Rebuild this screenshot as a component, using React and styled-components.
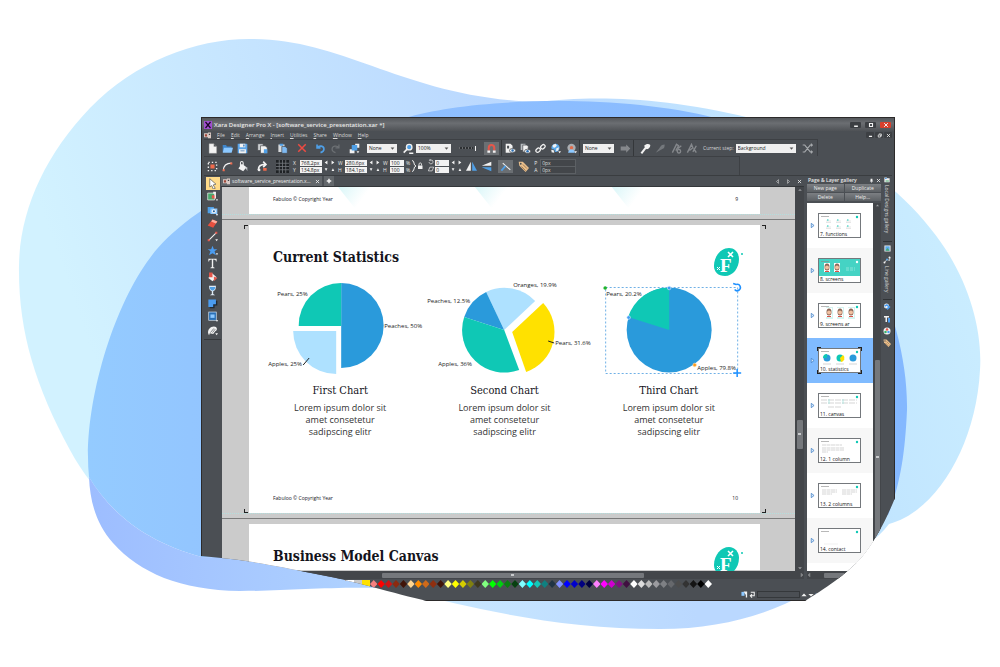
import React from 'react';
import styled, { createGlobalStyle } from 'styled-components';

const ui = '"Open Sans", "Noto Sans", sans-serif';
const body = '"Open Sans", "Noto Sans", sans-serif';
const serif = '"DejaVu Serif Condensed", "DejaVu Serif", serif';

const teal = '#0fc8b5';
const blue = '#2a9adb';
const sky = '#aee1ff';
const yellow = '#ffe100';

const GlobalStyle = createGlobalStyle`
	* {
		box-sizing: border-box;
	}
	body {
		margin: 0;
		background: #fff;
		font-family: ${ui};
	}
	h1, h2, h3, p, ul {
		margin: 0;
		padding: 0;
	}
`;

/* ---------- icons, all on a 16 x 16 grid ---------- */

const W = '#f2f2f2';
const B = '#4f9fe6';
const G = '#85888c';

const drawings = {
	newPage: <path fill={W} d="M3 1h7l4 4v10H3zM10 1v4h4" stroke="#999" strokeWidth=".6" />,
	open: (
		<>
			<path fill="#3f86cc" d="M1 3h5l1 2h7v8H1z" />
			<path fill="#8cc8ff" d="M3 7h13l-2 7H1z" />
		</>
	),
	save: (
		<>
			<path fill="#5ba4e8" d="M1 1h13l1 1v13H1z" />
			<path fill={W} d="M4 1h8v5H4zM3 9h10v6H3z" />
			<path fill="#3a76b5" d="M9 2h2v3H9zM5 11h6v1H5z" />
		</>
	),
	copy: (
		<>
			<path fill="#d0d3d6" stroke="#44484c" d="M1 1h8v10H1z" />
			<path fill={W} stroke="#44484c" d="M5 4h7l3 3v8H5z" />
			<path fill={B} d="M10 9h5v6h-5z" />
		</>
	),
	paste: (
		<>
			<path fill="#d8dadc" d="M2 2h9v11H2z" />
			<path fill={B} d="M4 1h5v3H4z" />
			<path fill="#7fbaf2" stroke="#44484c" d="M7 5h5l3 3v7H7z" />
		</>
	),
	remove: <path stroke="#ee4b42" strokeWidth="2.4" d="M2 2l12 12M14 2L2 14" />,
	undo: <path fill="none" stroke={B} strokeWidth="2.4" d="M3 2v5h5M3 7c3-4 10-3 10 2 0 3-2 4-5 5" />,
	redo: <path fill="none" stroke="#6c7074" strokeWidth="1.8" d="M13 2v5H8M13 7C10 3 3 4 3 9c0 3 2 4 5 5" />,
	arrange: (
		<>
			<path fill={W} d="M9 1h6v6H9zM1 9h7v6H1z" />
			<path fill={B} d="M4 3h8v8H4z" />
			<path fill={W} d="M11 12h4l-2 3z" />
		</>
	),
	zoom: (
		<>
			<circle cx="9" cy="6" r="4" fill="#4f9fe6" stroke={W} strokeWidth="2" />
			<path stroke={W} strokeWidth="2.4" d="M6 9l-5 5M9 15h6" />
		</>
	),
	magnet: (
		<>
			<path fill="none" stroke="#e4574b" strokeWidth="3" d="M4 11V7a4 4 0 018 0v4" />
			<path fill={W} d="M2 11h4v3H2zM10 11h4v3h-4z" />
		</>
	),
	preview: (
		<>
			<path fill={W} d="M1 1h7l3 3v10H1z" />
			<path fill="#4b4f54" d="M3 4h3v4H3z" />
			<ellipse cx="11" cy="11" rx="4.5" ry="3" fill={W} stroke="#3c4044" />
			<circle cx="11" cy="11" r="1.8" fill="#2a6fb5" />
		</>
	),
	previewAll: (
		<>
			<path fill="#b8bcc0" d="M1 1h7v9H1z" />
			<path fill={W} stroke="#44484c" d="M4 3h6l2 2v8H4z" />
			<ellipse cx="11" cy="12" rx="4.5" ry="3" fill={W} stroke="#3c4044" />
			<circle cx="11" cy="12" r="1.8" fill="#2a6fb5" />
		</>
	),
	link: (
		<g fill="none" stroke={W} strokeWidth="1.8">
			<rect x="1" y="8" width="7" height="5" rx="2.5" transform="rotate(-45 4.5 10.5)" />
			<rect x="8" y="3" width="7" height="5" rx="2.5" transform="rotate(-45 11.5 5.5)" />
		</g>
	),
	globe: (
		<>
			<circle cx="8" cy="7" r="6" fill="#5aa9ea" />
			<path fill={W} d="M4 3l4-2 2 3-3 3-3-1zM9 8l4-2-1 5-3 1z" />
			<path fill={W} stroke="#3c4044" d="M1 9l5 1 1 5-5-1z" />
			<path fill={W} d="M12 12h4l-2 3z" />
		</>
	),
	globeUser: (
		<>
			<circle cx="8" cy="7" r="6" fill="#a9adb1" />
			<circle cx="8" cy="7" r="2.5" fill="#e06b4a" />
			<path fill="#8cc8ff" d="M3 14c1-6 9-6 10 0z" />
			<path fill={W} d="M12 12h4l-2 3z" />
		</>
	),
	arrow: <path fill={G} d="M1 5h8V2l6 6-6 6v-3H1z" />,
	key: (
		<>
			<path fill={W} d="M6 4c3-3 7-3 9-1 0 3-2 6-5 6l-2-1z" />
			<path stroke={W} strokeWidth="3" d="M9 6l-7 9" />
		</>
	),
	keyOff: <path fill="#74787c" d="M14 2c-3 0-5 1-6 3l-2 3-5 6 7-4 4-2c2-1 2-4 2-6z" />,
	keyGroup: <path fill="none" stroke={G} strokeWidth="2" d="M2 14L8 2l3 2-4 7M10 8l5-4M9 12c1-4 5-3 5 0s-4 4-5 0z" />,
	keyCut: <path fill="none" stroke={G} strokeWidth="2" d="M2 14L8 2l2 5-5 4M10 13l5-9M11 8l4 6" />,
	shuffle: <path fill="none" stroke="#a5a8ab" strokeWidth="1.6" d="M1 3h3l8 10h3M1 13h3l8-10h3M13 1l2 2-2 2M13 11l2 2-2 2" />,
	selectAll: (
		<>
			<path fill="#ef6a4c" d="M5 5h6v6H5z" />
			<path stroke={W} strokeWidth="2" strokeDasharray="2 3" fill="none" d="M2 2h12v12H2z" />
		</>
	),
	curve: (
		<>
			<path fill="none" stroke={W} strokeWidth="1.8" d="M2 14C2 7 6 3 14 3" />
			<path fill="#ef6a4c" d="M1 12h3v3H1zM12 2h3v3h-3z" />
		</>
	),
	bucket: (
		<>
			<path fill={W} d="M7 4l7 5-5 6-7-4z" />
			<path fill="none" stroke={W} strokeWidth="1.5" d="M5 8V3c0-3 4-3 4 0v4" />
			<path fill="#c9ccd0" d="M12 9l3 0v6z" />
		</>
	),
	redBucket: (
		<>
			<path fill={W} d="M7 3l7 6-6 6-6-5z" />
			<path fill="#e4574b" d="M3 2h5v7H3zM10 8l5 2-5 5z" />
		</>
	),
	swap: (
		<>
			<path fill="none" stroke={W} strokeWidth="2.4" d="M2 13C2 7 6 5 12 5M9 1l4 4-4 4" />
			<path fill="#ef6a4c" d="M9 10h5v4H9z" />
			<circle cx="3" cy="13" r="2" fill={W} />
		</>
	),
	grid: (
		<>
			<path fill="#1f2225" d="M0 0h16v16H0z" />
			<path stroke="#74787c" strokeWidth="1" d="M4 0v16M8 0v16M12 0v16M0 4h16M0 8h16M0 12h16" />
		</>
	),
	steps: <path fill={W} d="M1 8l4-3v6zM15 8l-4-3v6z" />,
	stepsV: <path fill={W} d="M1 6h4l-2 4zM11 10h4l-2-4z" />,
	lock: (
		<>
			<path fill={W} d="M4 7h9v7H4z" />
			<path fill="none" stroke={W} strokeWidth="1.6" d="M6 7V4c0-3 5-3 5 0v3" />
		</>
	),
	turn: <path fill="none" stroke={W} strokeWidth="1.8" d="M4 3h7c4 2 3 10-3 10-4 0-5-3-5-5M7 0L4 3l3 3" />,
	skew: <path fill="none" stroke={W} strokeWidth="1.8" d="M5 3h10l-4 10H1z" />,
	flipH: (
		<>
			<path fill={W} d="M7 1v13H0z" />
			<path fill={B} d="M9 1v13h7z" />
		</>
	),
	flipV: (
		<>
			<path fill={W} d="M15 1v6H1z" />
			<path fill={B} d="M15 15V9H1z" />
		</>
	),
	scaleLines: (
		<>
			<path stroke={W} strokeWidth="1.6" d="M4 3l11 10" />
			<path stroke={B} strokeWidth="2.6" d="M2 14l6-7" />
		</>
	),
	tag: (
		<>
			<path fill="#e9bf8d" d="M1 1h6l9 9-5 6-9-9z" />
			<path stroke="#8a6238" d="M7 5l6 6M5 8l6 6" />
			<circle cx="4" cy="4" r="1.3" fill="#4b4f54" />
		</>
	),
	pointer: <path fill="#fff" stroke="#555" d="M4 1l9 8-4 1 3 5-3 1-2-5-3 2z" />,
	photo: (
		<>
			<path fill="#49a86c" stroke={W} d="M1 3h10v10H1z" />
			<path fill="#e4574b" d="M7 6h6v5H7z" />
			<path fill={W} d="M9 1h4v10h-2V4H9zM13 12h3l-1.5 3z" />
		</>
	),
	camera: (
		<>
			<path fill={B} d="M1 3h9v9H1z" />
			<path fill="#8cc8ff" d="M5 5h10v8H5z" />
			<circle cx="10" cy="9" r="3" fill={W} />
			<circle cx="10" cy="9" r="1.5" fill="#245f9c" />
			<path fill={W} d="M13 13h3l-1.5 3z" />
		</>
	),
	eraser: (
		<>
			<path fill="#e8503f" d="M8 2l7 3-6 9-8-3z" />
			<path fill="#ffaf9f" d="M8 2l7 3-2 3-7-3z" />
		</>
	),
	line: (
		<>
			<path stroke={W} strokeWidth="1.5" d="M2 14L14 2" />
			<path fill="#e4574b" d="M1 12h3v3H1zM12 1h3v3h-3z" />
			<path fill={W} d="M12 12h4l-2 3z" />
		</>
	),
	star: (
		<>
			<path fill="#4b9cf0" d="M8 1l2 5h5l-4 3 2 6-5-3-5 3 2-6-4-3h5z" />
			<path fill={W} d="M13 12h3l-1.5 3z" />
		</>
	),
	text: <path fill={W} d="M2 1h12v4h-1c0-2-1-3-4-3v11l2 1v1H5v-1l2-1V2C4 2 3 3 3 5H2z" />,
	glass: (
		<>
			<path fill="#dfeaf5" d="M3 1h10c0 5-1 7-4 8v4l3 2H4l3-2V9C4 8 3 6 3 1z" />
			<path fill={B} d="M4 3h8c0 3-2 5-4 5S4 6 4 3z" />
		</>
	),
	bevel: (
		<>
			<path fill="#1f2a36" d="M4 4h11v7h-4v4H4z" />
			<path fill="#4b9cf0" d="M2 2h11v7H9v4H2z" />
		</>
	),
	frame: (
		<>
			<path fill="#cfe5fa" d="M2 1h12v13H2z" />
			<path fill="#2a6fb5" d="M3 2h10v11H3z" />
			<path fill="#8cc8ff" d="M5 5h6v5H5z" />
			<path fill={W} d="M13 13h3l-1.5 3z" />
		</>
	),
	brush: (
		<>
			<path fill={W} d="M2 13c-2-6 3-11 8-11s6 5 2 7l-3 4-5-1-1 3z" />
			<path stroke="#4b4f54" d="M5 11l5-6M8 11l4-5" />
			<path fill={W} d="M12 12h4l-2 3z" />
		</>
	),
	folder: (
		<>
			<path fill={W} d="M1 1h6l2 2h6v11H1z" />
			<path fill="#3b8ad8" d="M3 2h4v3H3z" />
			<path fill="#49a86c" d="M4 9h9v3H4z" />
		</>
	),
	picture: (
		<>
			<path fill={W} d="M1 1h14v14H1z" />
			<path fill="#5aa9ea" d="M3 3h10v10H3z" />
			<path fill="#49a86c" d="M3 13l5-6 5 6z" />
		</>
	),
	dots: (
		<>
			<path stroke={W} d="M3 13l5-6 5 2 1-6" fill="none" strokeWidth="1.5" />
			<circle cx="3" cy="13" r="2" fill={W} />
			<circle cx="8" cy="7" r="2" fill="#5aa9ea" />
			<circle cx="13" cy="3" r="2" fill={W} />
		</>
	),
	cube: (
		<>
			<circle cx="7" cy="6" r="5" fill={W} />
			<path fill="#4b9cf0" d="M2 5l6-3 7 6-6 6z" />
			<path fill={W} d="M5 6h4v4H5z" />
		</>
	),
	letter: (
		<>
			<path fill={W} d="M2 2h10v3H8v9H5V5H2z" />
			<path fill="#4b9cf0" d="M10 6h4v9h-4z" />
		</>
	),
	colours: (
		<>
			<circle cx="8" cy="8" r="7" fill={W} />
			<circle cx="8" cy="5" r="2.5" fill="#e4574b" />
			<circle cx="5" cy="10" r="2.5" fill="#37b26c" />
			<circle cx="11" cy="10" r="2.5" fill="#4b9cf0" />
		</>
	),
	logo: (
		<>
			<path fill="#a04fd0" d="M0 0h16v16H0z" />
			<path stroke="#1a0826" strokeWidth="2.4" d="M3 2l10 12M13 2L3 14" />
		</>
	),
	docIcon: (
		<>
			<path fill="#d9c9c4" d="M0 3h11v9H0zM9 1h7v13H9z" />
			<path fill="#a0493a" d="M2 5h5v5H2z" />
			<path fill="#3c4044" d="M11 4h3v3h-3z" />
		</>
	),
	close: <path stroke={W} strokeWidth="2.6" d="M3 3l10 10M13 3L3 13" />,
	minimise: <path fill={W} d="M3 9h10v4H3z" />,
	restore: <path fill="none" stroke={W} strokeWidth="2.4" d="M4 6h7v7H4zM6 3h8v8" />,
	maximise: <path fill="none" stroke={W} strokeWidth="3" d="M4 4h8v8H4z" />,
	plus: <path stroke={W} strokeWidth="4" d="M8 2v12M2 8h12" />,
	left: <path fill="none" stroke={W} strokeWidth="1.6" d="M11 2v12L5 8z" />,
	right: <path fill="none" stroke={W} strokeWidth="1.6" d="M5 2v12l6-6z" />,
	up: <path fill="#9a9da0" d="M3 10h10L8 5z" />,
	down: <path fill="#9a9da0" d="M3 6h10l-5 5z" />,
	upWhite: <path fill={W} d="M1 11h14L8 4z" />,
	downWhite: <path fill={W} d="M1 5h14l-7 7z" />,
	caret: <path fill="#555" d="M2 5h12l-6 7z" />,
	marker: <path fill="#dcecff" stroke="#3f7fc4" strokeWidth="2.4" d="M4 1v14l9-7z" />,
	pin: <path fill={W} d="M5 2h6v7h2v2H9v4H7v-4H3V9h2z" />,
	cursor: (
		<>
			<path fill="#8cc8ff" d="M1 2h7v9H1z" />
			<path fill={W} d="M6 1h8v14h-3V9z" />
		</>
	),
	undoStack: <path fill="none" stroke={W} strokeWidth="2.4" d="M4 3h8v8H3M7 7L3 11l4 4" />,
};

const Icon = ({ name, size = 11 }) => (
	<svg width={size} height={size} viewBox="0 0 16 16" aria-hidden="true">
		{drawings[name]}
	</svg>
);

/* ---------- page and window shell ---------- */

const Stage = styled.main`
	position: relative;
	min-height: 100vh;
	padding: 117px 10.5% 66px 20.1%;
	overflow: hidden;
`;

const Backdrop = styled.svg`
	position: absolute;
	inset: 0;
	width: 100%;
	height: 100%;
`;

const Window = styled.section`
	position: relative;
	display: flex;
	flex-direction: column;
	min-height: 484px;
	padding: 0 2px;
	border: 1px solid #2c2a2a;
	background: #4b4f54;
	color: #e8e8e8;
	font-size: 6px;
	line-height: 8px;
	clip-path: url(#window-shape);
`;

const TitleBar = styled.header`
	display: flex;
	align-items: center;
	gap: 2px;
	height: 13px;
	margin: 0 -2px;
	padding: 0 3px 0 2px;
	background: linear-gradient(#54575b, #6b6e72 40%, #4f5256);
`;

const AppTitle = styled.h1`
	flex: 1;
	font-size: 6px;
	font-weight: 600;
	white-space: nowrap;
`;

const WinButton = styled.button`
	display: grid;
	place-items: center;
	width: ${({ $small }) => ($small ? '8px' : '11px')};
	height: 6px;
	margin-left: ${({ $small }) => ($small ? '1px' : '2px')};
	padding: 0;
	border: 0;
	border-radius: 1px;
	background: ${({ $danger }) => ($danger ? '#d9402c' : '#3c3f43')};
`;

const MenuBar = styled.nav`
	display: flex;
	align-items: center;
	gap: 6px;
	height: 8px;
`;

const MenuItem = styled.button`
	padding: 0;
	border: 0;
	background: none;
	color: #d8d8d8;
	font: 5px/8px ${ui};
`;

const MenuEntry = styled(MenuItem)`
	&::first-letter {
		text-decoration: underline;
	}
`;

const Grow = styled.span`
	flex: 1;
`;

const ToolRow = styled.div`
	display: flex;
	align-items: center;
	width: ${({ $width }) => $width};
	height: ${({ $tall }) => ($tall ? '19px' : '17px')};
	padding-left: 1px;
	border: 1px solid #3d4044;
	border-width: 1px 1px 0 0;
`;

const ToolGroup = styled.div`
	display: flex;
	align-items: center;
	gap: ${({ $gap = 0 }) => $gap}px;
	height: 100%;
	margin-right: ${({ $space = 4 }) => $space}px;
	border-right: ${({ $divided }) => ($divided ? '1px solid #34373a' : '0')};
`;

const ToolButton = styled.button`
	display: grid;
	place-items: center;
	width: ${({ $wide }) => ($wide ? '16px' : '15px')};
	height: 13px;
	padding: 0;
	border: 0;
	background: ${({ $active }) => ($active ? '#6b6f73' : 'none')};
`;

const Picker = styled.label`
	display: flex;
	align-items: center;
	width: ${({ $width }) => $width}px;
	height: 9px;
	padding-right: 2px;
	background: #f0f0f0;
`;

const PickerSelect = styled.select`
	flex: 1;
	min-width: 0;
	height: 9px;
	padding: 0 0 0 2px;
	border: 0;
	background: none;
	color: #222;
	font: 5px/9px ${ui};
	appearance: none;
`;

const FieldPair = styled.div`
	display: grid;
	gap: 1px;
`;

const FieldRow = styled.label`
	display: flex;
	align-items: center;
	gap: 2px;
	height: 6px;
	font-size: 5px;
	line-height: 6px;
`;

const FieldName = styled.span`
	width: 5px;
`;

const FieldInput = styled.input`
	width: ${({ $width }) => $width}px;
	height: 6px;
	padding: 0 1px;
	border: 0;
	background: ${({ $dark }) => ($dark ? '#43464a' : '#f2f2f2')};
	outline: ${({ $dark }) => ($dark ? '1px solid #5c6064' : 'none')};
	color: ${({ $dark }) => ($dark ? '#dcdcdc' : '#222')};
	font: 5px/6px ${ui};
`;

const Body = styled.div`
	display: flex;
	flex: 1;
	min-height: 0;
	border-top: 1px solid #3a3d40;
`;

const ToolBox = styled.div`
	display: grid;
	grid-auto-rows: 1fr;
	align-self: flex-start;
	justify-items: center;
	width: 17px;
	height: 164px;
	padding: 1px 0 2px;
	border-bottom: 1px solid #34373a;
`;

const BoxTool = styled.button`
	display: grid;
	place-items: center;
	width: 14px;
	padding: 0;
	border: 0;
	background: ${({ $active }) => ($active ? '#ffdb8a' : 'none')};
`;

const Editor = styled.div`
	display: flex;
	flex: 1;
	flex-direction: column;
	min-width: 0;
`;

const Tabs = styled.div`
	display: flex;
	align-items: center;
	gap: 2px;
	height: 11px;
	border-bottom: 1px solid #34373a;
`;

const Tab = styled.button`
	display: flex;
	align-items: center;
	gap: 2px;
	height: 10px;
	padding: 0 2px;
	border: 0;
	background: ${({ $plain }) => ($plain ? 'none' : '#63676b')};
	color: #f0f0f0;
	font: 5px/9px ${ui};
	white-space: nowrap;
`;

const Viewport = styled.div`
	display: flex;
	flex: 1;
`;

const Canvas = styled.div`
	display: flex;
	flex: 1;
	flex-direction: column;
	min-width: 0;
	margin-left: 1px;
	padding: 0 35px 0 27px;
	background: #cbcbcb;
	overflow: hidden;
`;

const PageGap = styled.div`
	height: 6px;
	margin: 0 -35px 5px -27px;
	border-bottom: 1px solid #7b7b7b;
	border-top: 1px dotted #b4dedd;
`;

const ScrollV = styled.div`
	display: flex;
	flex-direction: column;
	align-items: center;
	justify-content: space-between;
	width: ${({ $width = 8 }) => $width}px;
	background: #43464a;
`;

const ScrollH = styled.div`
	display: flex;
	align-items: center;
	justify-content: space-between;
	height: 8px;
	background: #43464a;
`;

const Thumb = styled.div`
	display: grid;
	place-items: center;
	width: ${({ $w }) => $w};
	height: ${({ $h }) => $h};
	margin-top: ${({ $top = 0 }) => $top}px;
	border-radius: 1px;
	background: #75787c;

	&::after {
		content: '';
		width: 3px;
		height: 2px;
		background: #c8cacc;
	}
`;

/* ---------- slides ---------- */

const SlidePage = styled.article`
	position: relative;
	display: flex;
	flex-direction: column;
	flex-shrink: 0;
	justify-content: ${({ $end }) => ($end ? 'flex-end' : 'flex-start')};
	height: ${({ $height }) => $height}px;
	background: #fff;
	color: #14141c;
`;

const SlideHead = styled.div`
	display: flex;
	flex-shrink: 0;
	align-items: flex-start;
	justify-content: space-between;
	height: 53px;
	padding: 23px 17px 0 24px;
`;

const SlideTitle = styled.h2`
	font: 700 14px/18px ${serif};
`;

const SlideFoot = styled.footer`
	display: flex;
	flex-shrink: 0;
	align-items: center;
	justify-content: space-between;
	height: 30px;
	margin-top: auto;
	padding: 0 22px 0 24px;
	font: 5px/8px ${body};
`;

const FootDecor = styled.svg`
	flex: 1;
	height: 24px;
`;

const ChartGrid = styled.div`
	display: grid;
	grid-template-columns: repeat(3, 1fr);
	padding: 0 9px;
`;

const ChartCard = styled.section`
	display: flex;
	flex-direction: column;
	align-items: center;
	text-align: center;
`;

const ChartSvg = styled.svg`
	width: 100%;
	height: 102px;
	overflow: visible;

	text {
		fill: #222;
		font: 6px ${body};
	}
`;

const ChartTitle = styled.h3`
	margin: 3px 0;
	font: 400 11px/16px ${serif};
`;

const ChartText = styled.p`
	width: 96px;
	color: #333;
	font: 9px/12px ${body};
`;

const CornerMark = styled.i`
	position: absolute;
	${({ $at }) => ($at.includes('top') ? 'top: 0' : 'bottom: 0')};
	${({ $at }) => ($at.includes('left') ? 'left: -5px' : 'right: -6px')};
	width: 4px;
	height: 4px;
	border: 0 solid #222;
	border-width: ${({ $at }) => ($at.includes('top') ? '1px' : 0)} ${({ $at }) => ($at.includes('left') ? 0 : '1px')}
		${({ $at }) => ($at.includes('top') ? 0 : '1px')} ${({ $at }) => ($at.includes('left') ? '1px' : 0)};
`;

const ThumbCorner = styled(CornerMark)`
	margin: -2px 4px -2px 3px;
`;

const corners = ['top left', 'top right', 'bottom left', 'bottom right'];

const BrandMark = () => (
	<svg width="30" height="29" viewBox="0 0 30 29" aria-label="Fabuloo">
		<path fill={teal} d="M16 0c6 0 10 5 10 11 0 9-6 17-14 17C5 28 1 24 1 18 1 8 8 0 16 0z" />
		<circle cx="29" cy="6" r="1" fill={teal} />
		<path stroke="#fff" strokeWidth="1.6" d="M15 4l5 5M20 4l-5 5" />
		<path stroke="#fff" strokeWidth="1" d="M4 19l3 3M7 19l-3 3" />
		<text x="7" y="24" fill="#fff" fontFamily="Liberation Serif, serif" fontWeight="700" fontSize="19">
			F
		</text>
	</svg>
);

const FirstChart = () => (
	<ChartSvg viewBox="0 0 164 102">
		<path fill={blue} d="M83 5a42.5 42.5 0 010 85z" />
		<path fill={teal} d="M83 5v43H40.500A42.5 42.5 0 0183 5z" />
		<path fill={sky} d="M78 53v43a43 43 0 01-43-43z" />
		<path stroke="#222" d="M45 87l6-7" />
		<text x="19" y="18">Pears, 25%</text>
		<text x="126" y="50">Peaches, 50%</text>
		<text x="10" y="88">Apples, 25%</text>
	</ChartSvg>
);

const SecondChart = () => (
	<ChartSvg viewBox="0 0 164 102">
		<path fill={sky} d="M82 52L64 14a42.5 42.5 0 0149 9z" />
		<path fill={blue} d="M82 52L42 39a42.5 42.5 0 0122-25z" />
		<path fill={teal} d="M82 52l15 40a42.5 42.5 0 01-55-53z" />
		<path fill={yellow} d="M90 54l31-29a42.5 42.5 0 01-17 69z" />
		<path stroke="#222" d="M126 63l6 2" />
		<text x="91" y="9">Oranges, 19.9%</text>
		<text x="5" y="25">Peaches, 12.5%</text>
		<text x="16" y="88">Apples, 36%</text>
		<text x="133" y="67">Pears, 31.6%</text>
	</ChartSvg>
);

const ThirdChart = () => (
	<ChartSvg viewBox="0 0 164 102">
		<circle cx="82" cy="52" r="42.5" fill={blue} />
		<path fill={teal} d="M82 52V9.500A42.5 42.5 0 0041 39z" />
		<rect x="18.5" y="9.5" width="132" height="86" fill="none" stroke="#6fb0e6" strokeDasharray="2 2" />
		<text x="19" y="18">Pears, 20.2%</text>
		<text x="110" y="92">Apples, 79.8%</text>
		<circle cx="18" cy="10" r="1.8" fill="#1fb32c" />
		<circle cx="82" cy="10" r="1.8" fill="#3f9df5" stroke="#d5eaff" strokeWidth=".6" />
		<circle cx="41.5" cy="39.5" r="1.8" fill="#3f9df5" stroke="#d5eaff" strokeWidth=".6" />
		<circle cx="107.5" cy="87" r="1.8" fill="#ff9a1a" stroke="#ffe0b0" strokeWidth=".6" />
		<path fill="none" stroke="#1e90ff" strokeWidth="1.5" d="M149 6.500a3.200 3.200 0 11-1.500 5M146 5.500l3 1" />
		<path stroke="#1e90ff" strokeWidth="1.5" d="M150 91v8M146 95h8" />
	</ChartSvg>
);

const charts = [
	{ title: 'First Chart', Chart: FirstChart },
	{ title: 'Second Chart', Chart: SecondChart },
	{ title: 'Third Chart', Chart: ThirdChart },
];

const Foot = ({ number, decor }) => (
	<SlideFoot>
		<span>Fabuloo © Copyright Year</span>
		{decor && (
			<FootDecor viewBox="0 0 394 24" preserveAspectRatio="none">
				<defs>
					<linearGradient id="fade" x2="1" y2=".4">
						<stop stopColor="#d9f6f8" />
						<stop offset=".7" stopColor="#fff" />
					</linearGradient>
				</defs>
				<path fill="url(#fade)" d="M5 0h40L22 22z" />
				<path fill="url(#fade)" d="M139 0h40l-23 22z" />
				<path fill="url(#fade)" d="M273 0h40l-23 22z" />
			</FootDecor>
		)}
		<span>{number}</span>
	</SlideFoot>
);

/* ---------- gallery ---------- */

const Gallery = styled.aside`
	display: flex;
	flex-direction: column;
	width: 74px;
	margin-left: 3px;
`;

const GalleryHead = styled.div`
	display: flex;
	align-items: center;
	gap: 2px;
	height: 8px;
	padding-left: 1px;
`;

const GalleryTitle = styled.h2`
	flex: 1;
	font-size: 5px;
	font-weight: 600;
	white-space: nowrap;
`;

const GalleryActions = styled.div`
	display: grid;
	grid-template-columns: 1fr 1fr;
	gap: 1px;
	padding-bottom: 2px;
`;

const ActionButton = styled.button`
	height: 8px;
	padding: 0;
	border: 0;
	background: linear-gradient(#7c7f83, #5c6064);
	color: #f0f0f0;
	font: 5px/8px ${ui};
`;

const GalleryBody = styled.div`
	display: flex;
	flex: 1;
`;

const PageList = styled.ul`
	flex: 1;
	background: #fff;
	list-style: none;
`;

const PageItem = styled.li`
	display: flex;
	align-items: center;
	gap: 3px;
	height: 45px;
	padding-left: 3px;
	background: ${({ $selected, $odd }) => ($selected ? '#80bbff' : $odd ? '#f7f7f7' : '#fff')};
`;

const PageThumb = styled.figure`
	position: relative;
	display: flex;
	flex-direction: column;
	width: 43px;
	height: 25px;
	margin: 0;
	border: 1px solid #74787c;
	background: #fff;
`;

const ThumbArt = styled.svg`
	width: 100%;
	height: 17px;
`;

const ThumbName = styled.figcaption`
	padding-left: 1px;
	color: #111;
	font: 5px/6px ${ui};
	white-space: nowrap;
`;

const SideTabs = styled.div`
	display: flex;
	flex-direction: column;
	align-items: center;
	gap: 2px;
	width: 10px;
	margin-left: 1px;
`;

const SideTab = styled.button`
	display: flex;
	flex-direction: column;
	align-items: center;
	gap: 2px;
	width: 9px;
	padding: 1px 0 ${({ $end = 1 }) => $end}px;
	border: 0;
	border-bottom: ${({ $end }) => ($end ? '1px solid #303336' : '0')};
	background: none;
	color: #dcdcdc;
	font: 5px/8px ${ui};
`;

const SideLabel = styled.span`
	writing-mode: vertical-rl;
	white-space: nowrap;
`;

const face = (x, key) => (
	<g key={key}>
		<path fill="#fff" d={`M${x - 3} 4h6v9h-6z`} />
		<ellipse cx={x} cy="8" rx="2.5" ry="3.5" fill="#8a6656" />
		<circle cx={x} cy="8.5" r="2" fill="#f1bfa0" />
		<path fill="#d9534a" d={`M${x - 2} 12h4v1h-4z`} />
	</g>
);

const thumbArt = {
	functions: (
		<>
			<path stroke="#ccc" strokeWidth=".5" strokeDasharray="5 5" d="M7 7h28M7 13h28M7 8.500h28M7 14.500h28" />
			<path stroke={teal} strokeDasharray="1.5 8.5" d="M8 6h28M8 12h28" />
		</>
	),
	screens: (
		<>
			<path fill="#45d3c4" d="M0 0h41v17H0z" />
			{face(8, 'a')}
			{face(18, 'b')}
			<path stroke="#b8f0ea" strokeDasharray="3 1" strokeWidth=".6" d="M27 9h9M27 11h9" />
		</>
	),
	people: (
		<>
			<path fill="#d4f3f0" d="M7 3h7v12H7zM18 3h7v12h-7zM29 3h7v12h-7z" />
			{face(10, 'a')}
			{face(21, 'b')}
			{face(32, 'c')}
		</>
	),
	statistics: (
		<>
			<circle cx="8" cy="9" r="3.5" fill={blue} />
			<path fill={teal} d="M8 9V5a4 4 0 00-4 4z" />
			<circle cx="21" cy="9" r="3.5" fill={teal} />
			<path fill={yellow} d="M21 9l3-3a4 4 0 01-2 7z" />
			<circle cx="34" cy="9" r="3.5" fill={blue} />
			<path stroke="#aaa" strokeWidth=".5" d="M4 15h8M17 15h8M30 15h8" />
		</>
	),
	canvas: (
		<>
			<path stroke="#bbb" strokeWidth=".6" strokeDasharray="6 1" d="M2 6h36M2 9h36M9 13h14" />
			<path stroke="#8adfd6" strokeWidth=".6" d="M10 5v5M24 5v5" />
		</>
	),
	column: <path stroke="#bbb" strokeWidth=".6" strokeDasharray="4 .5" d="M3 6h20M3 9h22M3 11h22M3 13h6" />,
	columns: <path stroke="#bbb" strokeWidth=".6" strokeDasharray="4 .5" d="M3 6h15M3 8h15M3 10h10M23 6h15M23 8h15M23 10h10" />,
	contact: <path stroke="#e0e0e0" strokeWidth=".5" d="M5 15h14" />,
};

const pages = [
	{ name: '7. functions', art: 'functions' },
	{ name: '8. screens', art: 'screens' },
	{ name: '9. screens ar', art: 'people' },
	{ name: '10. statistics', art: 'statistics', selected: true },
	{ name: '11. canvas', art: 'canvas' },
	{ name: '12. 1 column', art: 'column' },
	{ name: '13. 2 columns', art: 'columns' },
	{ name: '14. contact', art: 'contact' },
];

/* ---------- palette and status ---------- */

const Palette = styled.div`
	display: flex;
	align-items: center;
	height: 10px;
	padding-left: 134px;
`;

const Swatch = styled.button`
	width: 8px;
	height: 8px;
	padding: 0;
	border: 0;
	background: ${({ $colour }) => $colour};
`;

const Diamonds = styled.div`
	display: grid;
	grid-template-columns: repeat(46, 1fr);
	width: 342px;
`;

const Diamond = styled(Swatch)`
	width: 100%;
	clip-path: polygon(50% 0, 100% 50%, 50% 100%, 0 50%);
`;

const StatusBar = styled.footer`
	display: flex;
	align-items: center;
	justify-content: flex-end;
	gap: 1px;
	height: 11px;
	padding-right: 68px;
	font-size: 5px;
`;

const StatusField = styled.div`
	width: 43px;
	height: 7px;
	border: 1px solid #35383b;
`;

const ramps = (
	'#f58080 #f00 #cf1212 #8b2a10 #401408 #ffd591 #ff8c00 #cf6a1a #8f2f10 #401408 ' +
	'#ffff80 #ff0 #d4cc00 #808010 #3e3820 #80ff80 #0f0 #00cf10 #0a8010 #084010 ' +
	'#80ffff #0ff #12c8b8 #108080 #203444 #8090ff #00f #0000cc #000080 #000040 ' +
	'#ff80ff #f0f #d000d0 #801080 #401040 #fff #ddd #bbb #9b9b9f #7e8084 #66686c ' +
	'#4d4d4d #333 #141414 #000 #fff'
).split(' ');

const boxTools = ['pointer', 'photo', 'camera', 'eraser', 'line', 'star', 'text', 'redBucket', 'glass', 'bevel', 'frame', 'brush'];

const Tool = ({ name, size, wide, active }) => (
	<ToolButton type="button" aria-label={name} $wide={wide} $active={active}>
		<Icon name={name} size={size} />
	</ToolButton>
);

const Select = ({ label, value, width }) => (
	<Picker $width={width}>
		<PickerSelect aria-label={label} defaultValue={value}>
			<option>{value}</option>
		</PickerSelect>
		<Icon name="caret" size={5} />
	</Picker>
);

const Fields = ({ names, values, width, unit, steps, icons, dark }) => (
	<FieldPair>
		{values.map((value, i) => (
			<FieldRow key={names[i]}>
				<FieldName>{icons ? <Icon name={icons[i]} size={6} /> : names[i]}</FieldName>
				<FieldInput aria-label={names[i]} defaultValue={value} $width={width} $dark={dark} />
				{unit}
				{steps && <Icon name={i ? 'stepsV' : 'steps'} size={11} />}
			</FieldRow>
		))}
	</FieldPair>
);

const Blobs = () => (
	<Backdrop viewBox="0 0 1000 667" preserveAspectRatio="none" aria-hidden="true">
		<defs>
			<linearGradient id="pale" x1="0" y1=".2" x2="1" y2="0">
				<stop stopColor="#d2f2ff" />
				<stop offset=".5" stopColor="#bad8ff" />
				<stop offset=".75" stopColor="#c2e6ff" />
				<stop offset="1" stopColor="#cff1ff" />
			</linearGradient>
			<linearGradient id="deep" x1="0" x2="1">
				<stop stopColor="#94cbff" />
				<stop offset=".25" stopColor="#92c1ff" />
				<stop offset="1" stopColor="#84b8ff" />
			</linearGradient>
			<linearGradient id="violet" x1="0" x2="1">
				<stop stopColor="#9dbdff" />
				<stop offset="1" stopColor="#b0d3ff" />
			</linearGradient>
			<linearGradient id="low" x1="0" x2="1">
				<stop stopColor="#cbeaff" />
				<stop offset=".6" stopColor="#bad8ff" />
				<stop offset="1" stopColor="#bad8ff" />
			</linearGradient>
			<clipPath id="window-shape" clipPathUnits="objectBoundingBox">
				<path
					transform="scale(.00144092 .00206612)"
					d="M0 0H694V381C684 405 676 420 664 436C650 455 620 474 604 484H226C195 477 150 463 110 456C80 450 50 443 0 439Z"
				/>
			</clipPath>
		</defs>
		<path
			fill="url(#pale)"
			d="M249 39C345 38 405 98 538 102C590 96 660 96 750 118C850 147 900 190 930 228C965 270 983 325 980 370C976 445 937 511 889 524C830 600 660 590 500 560L295 570C255 563 240 559 202 557C145 542 98 502 70 450C35 385 18 330 19 265C20 210 45 155 90 108C135 62 195 39 249 39Z"
		/>
		<path fill="url(#low)" d="M400 590C480 610 560 629 660 629C790 629 870 560 895 498L700 500Z" />
		<path
			fill="url(#deep)"
			d="M405 118C470 98 620 93 715 118C830 150 909 300 907 410C905 455 900 485 888 515L500 560L295 570C255 563 240 559 202 557C145 542 110 512 89 477C82 410 112 308 150 258C180 215 270 160 405 118Z"
		/>
		<path fill="url(#violet)" d="M89 477C110 512 145 542 202 557L300 560L380 588C320 587 290 591 240 591C180 590 140 573 113 543C97 525 90 503 89 477Z" />
	</Backdrop>
);

const App = () => (
	<Stage>
		<GlobalStyle />
		<Blobs />
		<Window>
			<TitleBar>
				<Icon name="logo" size={8} />
				<AppTitle>Xara Designer Pro X - [software_service_presentation.xar *]</AppTitle>
				<WinButton aria-label="Minimise"><Icon name="minimise" size={6} /></WinButton>
				<WinButton aria-label="Maximise"><Icon name="maximise" size={6} /></WinButton>
				<WinButton aria-label="Close" $danger><Icon name="close" size={6} /></WinButton>
			</TitleBar>
			<MenuBar>
				<Icon name="docIcon" size={7} />
				{['File', 'Edit', 'Arrange', 'Insert', 'Utilities', 'Share', 'Window', 'Help'].map((item) => (
					<MenuEntry key={item} type="button">{item}</MenuEntry>
				))}
				<Grow />
				<ToolGroup $space={0}>
					<WinButton aria-label="Minimise document" $small><Icon name="minimise" size={5} /></WinButton>
					<WinButton aria-label="Restore document" $small><Icon name="restore" size={5} /></WinButton>
					<WinButton aria-label="Close document" $small><Icon name="close" size={5} /></WinButton>
				</ToolGroup>
			</MenuBar>

			<ToolRow $width="614px">
				<ToolGroup>
					<Tool name="newPage" />
					<Tool name="open" />
					<Tool name="save" />
				</ToolGroup>
				<ToolGroup $gap={4}>
					<Tool name="copy" wide />
					<Tool name="paste" wide />
					<Tool name="remove" size={10} />
				</ToolGroup>
				<ToolGroup>
					<Tool name="undo" />
					<Tool name="redo" />
				</ToolGroup>
				<ToolGroup $gap={5}>
					<Tool name="arrange" />
					<Select label="Quality" value="None" width={30} />
				</ToolGroup>
				<ToolGroup>
					<Tool name="zoom" />
					<Select label="Zoom" value="100%" width={35} />
				</ToolGroup>
				<ToolGroup $space={5}>
					<svg width="24" height="10" viewBox="0 0 24 10">
						<path stroke="#2c2f32" strokeWidth="2" d="M4 5h14" />
						<path stroke="#a8aaac" strokeDasharray="1 2" d="M4 5h14" />
						<path fill={W} d="M20 3h1v5h-1z" />
					</svg>
				</ToolGroup>
				<ToolGroup $divided $space={1} $gap={2}>
					<Tool name="magnet" active />
					<Grow />
				</ToolGroup>
				<ToolGroup $divided $space={3}>
					<Tool name="preview" />
					<Tool name="previewAll" />
					<Tool name="link" />
					<Tool name="globe" />
					<Tool name="globeUser" wide />
				</ToolGroup>
				<ToolGroup $divided $gap={4}>
					<Select label="Link target" value="None" width={31} />
					<Tool name="arrow" />
				</ToolGroup>
				<ToolGroup>
					<Tool name="key" />
					<Tool name="keyOff" />
					<Tool name="keyGroup" wide />
					<Tool name="keyCut" />
				</ToolGroup>
				<ToolGroup $gap={2}>
					<MenuItem as="span">Current step:</MenuItem>
					<Select label="Current step" value="Background" width={60} />
				</ToolGroup>
				<Tool name="shuffle" />
			</ToolRow>

			<ToolRow $width="536px" $tall>
				<ToolGroup>
					<Tool name="selectAll" />
					<Tool name="curve" />
					<Tool name="bucket" />
				</ToolGroup>
				<ToolGroup $gap={4} $space={3}>
					<Tool name="swap" wide />
					<Tool name="grid" wide size={13} />
				</ToolGroup>
				<ToolGroup $gap={3} $space={2}>
					<Fields names={['X', 'Y']} values={['768,2px', '134,8px']} width={22} steps />
					<Fields names={['W', 'H']} values={['280,6px', '184,1px']} width={22} steps />
					<Fields names={['W', 'H']} values={['100', '100']} width={14} unit="%" />
				</ToolGroup>
				<ToolGroup>
					<svg width="4" height="12" viewBox="0 0 4 12">
						<path fill="none" stroke={W} d="M0 .5c3 0 1 5 4 5.500-3 .5-1 5.500-4 5.500" />
					</svg>
					<Icon name="lock" size={8} />
				</ToolGroup>
				<ToolGroup $space={2}>
					<Fields names={['Rotate', 'Skew']} values={['0', '0']} icons={['turn', 'skew']} width={14} steps />
				</ToolGroup>
				<ToolGroup>
					<Tool name="flipH" />
					<Tool name="flipV" />
				</ToolGroup>
				<ToolGroup $gap={3}>
					<Tool name="scaleLines" active />
					<Tool name="tag" />
					<Fields names={['P', 'A']} values={['0px', '0px']} width={34} dark />
				</ToolGroup>
			</ToolRow>

			<Body>
				<ToolBox>
					{boxTools.map((name, i) => (
						<BoxTool key={name} type="button" aria-label={name} $active={i === 0}>
							<Icon name={name} size={11} />
						</BoxTool>
					))}
				</ToolBox>
				<Editor>
					<Tabs>
						<Tab type="button">
							<Icon name="docIcon" size={7} />
							software_service_presentation.x...
							<Grow />
							<Icon name="close" size={5} />
						</Tab>
						<Tab type="button" aria-label="New tab"><Icon name="plus" size={6} /></Tab>
						<Grow />
						<Tab type="button" aria-label="Previous" $plain><Icon name="left" size={5} /></Tab>
						<Tab type="button" aria-label="Next" $plain><Icon name="right" size={5} /></Tab>
						<Tab type="button" aria-label="Close" $plain><Icon name="close" size={5} /></Tab>
					</Tabs>
					<Viewport>
						<Canvas>
							<SlidePage $height={27} $end>
								<Foot number="9" decor />
							</SlidePage>
							<PageGap />
							<SlidePage $height={288}>
								{corners.map((at) => (
									<CornerMark key={at} $at={at} />
								))}
								<SlideHead>
									<SlideTitle>Current Statistics</SlideTitle>
									<BrandMark />
								</SlideHead>
								<ChartGrid>
									{charts.map(({ title, Chart }) => (
										<ChartCard key={title}>
											<Chart />
											<ChartTitle>{title}</ChartTitle>
											<ChartText>Lorem ipsum dolor sit amet consetetur sadipscing elitr</ChartText>
										</ChartCard>
									))}
								</ChartGrid>
								<Foot number="10" />
							</SlidePage>
							<PageGap />
							<SlidePage $height={46}>
								<SlideHead>
									<SlideTitle>Business Model Canvas</SlideTitle>
									<BrandMark />
								</SlideHead>
							</SlidePage>
						</Canvas>
						<ScrollV $width={9}>
							<Icon name="up" size={6} />
							<Thumb $w="6px" $h="29px" $top={110} />
							<Icon name="down" size={6} />
						</ScrollV>
					</Viewport>
					<ScrollH>
						<Icon name="left" size={4} />
						<Thumb $w="262px" $h="5px" />
						<Icon name="right" size={4} />
					</ScrollH>
				</Editor>

				<Gallery>
					<GalleryHead>
						<GalleryTitle>Page &amp; Layer gallery</GalleryTitle>
						<Icon name="pin" size={5} />
						<Icon name="close" size={5} />
					</GalleryHead>
					<GalleryActions>
						{['New page', 'Duplicate', 'Delete', 'Help...'].map((action) => (
							<ActionButton key={action} type="button">{action}</ActionButton>
						))}
					</GalleryActions>
					<GalleryBody>
						<PageList>
							{pages.map(({ name, art, selected }, i) => (
								<PageItem key={name} $selected={selected} $odd={i % 2 === 1}>
									<Icon name="marker" size={5} />
									<PageThumb>
										<ThumbArt viewBox="0 0 41 17" preserveAspectRatio="none">
											{thumbArt[art]}
											<path stroke="#888" strokeWidth=".6" d="M2 2.500h8" />
											<circle cx="38" cy="3" r="1.2" fill={art === 'screens' ? '#fff' : teal} />
										</ThumbArt>
										<ThumbName>{name}</ThumbName>
										{selected && corners.map((at) => <ThumbCorner key={at} $at={at} />)}
									</PageThumb>
								</PageItem>
							))}
						</PageList>
						<ScrollV>
							<Icon name="up" size={5} />
							<Thumb $w="5px" $h="194px" $top={140} />
							<Icon name="down" size={5} />
						</ScrollV>
					</GalleryBody>
					<ScrollH>
						<Icon name="left" size={4} />
						<Thumb $w="40px" $h="5px" />
						<Icon name="right" size={4} />
					</ScrollH>
				</Gallery>

				<SideTabs>
					<SideTab type="button" $end={8}>
						<Icon name="folder" size={6} />
						<SideLabel>Local Designs gallery</SideLabel>
					</SideTab>
					<SideTab type="button" aria-label="Image gallery"><Icon name="picture" size={7} /></SideTab>
					<SideTab type="button" $end={6}>
						<Icon name="dots" size={8} />
						<SideLabel>Line gallery</SideLabel>
					</SideTab>
					{['cube', 'letter', 'colours', 'tag'].map((name) => (
						<SideTab key={name} type="button" aria-label={name}>
							<Icon name={name} size={8} />
						</SideTab>
					))}
				</SideTabs>
			</Body>

			<Palette>
				{['#ff8c1a', '#fff', '#c8c8c8', '#ffe100'].map((colour) => (
					<Swatch key={colour} type="button" aria-label={colour} $colour={colour} />
				))}
				<Diamonds>
					{ramps.map((colour, i) => (
						<Diamond key={i} type="button" aria-label={colour} $colour={colour} />
					))}
				</Diamonds>
			</Palette>
			<StatusBar>
				<Icon name="cursor" size={7} />
				<Icon name="undoStack" size={7} />
				<StatusField />
				<Icon name="upWhite" size={6} />
				<Icon name="downWhite" size={6} />
				<span>0px</span>
			</StatusBar>
		</Window>
	</Stage>
);

export default App;
